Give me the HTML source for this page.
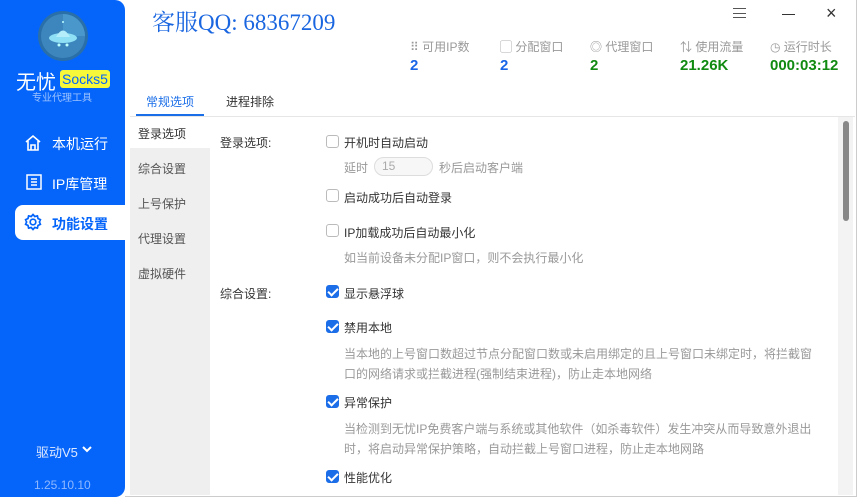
<!DOCTYPE html>
<html><head><meta charset="utf-8"><style>
*{margin:0;padding:0;box-sizing:border-box}
body{width:861px;height:503px;background:#fff;font-family:"Liberation Sans","Noto Sans CJK SC",sans-serif;font-size:12px;color:#333;position:relative;overflow:hidden}
.a{position:absolute;white-space:nowrap}
.side{position:absolute;left:0;top:0;width:125px;height:497px;background:#0565fa;border-radius:0 10px 10px 0}
.cb{position:absolute;width:13px;height:13px;border:1px solid #bbb;border-radius:3px;background:#fff}
.cb.on{background:#1c6de8;border-color:#1c6de8}
.cb.on:after{content:"";position:absolute;left:3px;top:0px;width:4px;height:8px;border:solid #fff;border-width:0 2px 2px 0;transform:rotate(45deg)}
.g{color:#999}
.lab{color:#999;font-size:12px}
.val{font-size:15px;font-weight:bold}
</style></head><body>
<div class="side">
 <svg class="a" style="left:37px;top:10px" width="52" height="52" viewBox="0 0 52 52">
  <circle cx="26" cy="26" r="25" fill="#2a6fa8"/><circle cx="26" cy="26" r="22" fill="#3d86bd"/>
  <path d="M26 4 A22 22 0 0 1 48 26 L26 26Z" fill="#4a97cc"/>
  <ellipse cx="26" cy="28" rx="14" ry="5" fill="#8fe0f5"/><path d="M19 27 Q26 14 33 27Z" fill="#b5eefa"/>
  <circle cx="22" cy="35" r="1.5" fill="#bff"/><circle cx="30" cy="35" r="1.5" fill="#bff"/><circle cx="26" cy="12" r="1" fill="#bff"/>
 </svg>
 <div class="a" style="left:16px;top:66px;color:#fff;font-size:20px">无忧</div>
 <div class="a" style="left:60px;top:70px;background:#f8f83a;color:#0565fa;font-size:14px;padding:0 2px;border-radius:3px;line-height:18px">Socks5</div>
 <div class="a" style="left:32px;top:89px;color:#9cc2ff;font-size:10px">专业代理工具</div>
 <svg class="a" style="left:24px;top:134px" width="18" height="18" viewBox="0 0 18 18" fill="none" stroke="#fff" stroke-width="1.6"><path d="M2 8 L9 2 L16 8 M4 7 V16 H14 V7 M7 16 V11 H11 V16"/></svg>
 <div class="a" style="left:52px;top:134px;color:#fff;font-size:14px">本机运行</div>
 <svg class="a" style="left:26px;top:174px" width="16" height="16" viewBox="0 0 16 16" fill="none" stroke="#fff" stroke-width="1.5"><rect x="1" y="1" width="14" height="14"/><path d="M5 5h6M5 8h6M5 11h6"/></svg>
 <div class="a" style="left:52px;top:174px;color:#fff;font-size:14px">IP库管理</div>
 <div class="a" style="left:15px;top:205px;width:110px;height:35px;background:#fff;border-radius:8px 0 0 8px"></div>
 <svg class="a" style="left:24px;top:213px" width="18" height="18" viewBox="0 0 18 18" fill="none" stroke="#0565fa" stroke-width="1.7"><circle cx="9" cy="9" r="2.8"/><path d="M9 1.5l1.8 2 2.6-.6.6 2.6 2.4 1.2-1 2.3 1 2.3-2.4 1.2-.6 2.6-2.6-.6L9 16.5l-1.8-2-2.6.6-.6-2.6L1.6 11.3l1-2.3-1-2.3L4 5.5l.6-2.6 2.6.6z"/></svg>
 <div class="a" style="left:52px;top:214px;color:#0565fa;font-size:14px;font-weight:bold">功能设置</div>
 <div class="a" style="left:36px;top:442px;color:#dfe9ff;font-size:13px">驱动V5</div>
 <svg class="a" style="left:82px;top:445px" width="10" height="8" viewBox="0 0 10 8" fill="none" stroke="#fff" stroke-width="2"><path d="M1 2l4 4 4-4"/></svg>
 <div class="a" style="left:34px;top:478px;color:#8fb8ff;font-size:12px">1.25.10.10</div>
</div>
<div class="a" style="left:152px;top:4px;color:#1a66e0;font-size:23px;font-family:'Liberation Serif','Noto Serif CJK SC',serif">客服QQ: 68367209</div>
<div class="a" style="left:733px;top:8px;width:13px;border-top:1.5px solid #555;height:10px;border-bottom:1.5px solid #555"></div>
<div class="a" style="left:733px;top:13px;width:13px;border-top:1.5px solid #555"></div>
<div class="a" style="left:782px;top:14px;width:13px;border-top:1.5px solid #333"></div>
<div class="a" style="left:826px;top:3px;font-size:18px;color:#333">×</div>
<div class="a lab" style="left:410px;top:38px">⠿ 可用IP数</div><div class="a val" style="left:410px;top:57px;color:#1a66e8">2</div>
<div class="a lab" style="left:500px;top:38px">▢ 分配窗口</div><div class="a val" style="left:500px;top:57px;color:#1a66e8">2</div>
<div class="a lab" style="left:590px;top:38px">◎ 代理窗口</div><div class="a val" style="left:590px;top:57px;color:#118a11">2</div>
<div class="a lab" style="left:680px;top:38px">⇅ 使用流量</div><div class="a val" style="left:680px;top:57px;color:#118a11">21.26K</div>
<div class="a lab" style="left:770px;top:38px">◷ 运行时长</div><div class="a val" style="left:770px;top:57px;color:#118a11">000:03:12</div>
<div class="a" style="left:146px;top:93px;color:#1a6ee8">常规选项</div>
<div class="a" style="left:226px;top:93px;color:#333">进程排除</div>
<div class="a" style="left:130px;top:116px;width:725px;border-top:1px solid #e6e6e6"></div>
<div class="a" style="left:136px;top:114px;width:68px;height:2px;background:#1a6ee8"></div>
<div class="a" style="left:130px;top:117px;width:80px;height:378px;background:#efefef"></div>
<div class="a" style="left:130px;top:117px;width:80px;height:31px;background:#fff"></div>
<div class="a" style="left:138px;top:125px">登录选项</div>
<div class="a" style="left:138px;top:160px;color:#555">综合设置</div>
<div class="a" style="left:138px;top:195px;color:#555">上号保护</div>
<div class="a" style="left:138px;top:230px;color:#555">代理设置</div>
<div class="a" style="left:138px;top:265px;color:#555">虚拟硬件</div>
<div class="a" style="left:838px;top:117px;width:15px;height:378px;background:#f3f3f3"></div>
<div class="a" style="left:843px;top:121px;width:6px;height:100px;background:#888;border-radius:3px"></div>
<div class="a" style="left:856px;top:0;width:1px;height:497px;background:#ccc"></div>
<div class="a" style="left:125px;top:496px;width:732px;height:1px;background:#ccc"></div>
<div class="a" style="left:220px;top:134px">登录选项:</div>
<div class="cb" style="left:326px;top:135px"></div><div class="a" style="left:344px;top:134px">开机时自动启动</div>
<div class="a g" style="left:344px;top:159px">延时</div>
<div class="a" style="left:374px;top:157px;width:59px;height:19px;border:1px solid #ddd;border-radius:10px;background:#f7f7f7;color:#aaa;padding-left:7px;line-height:17px">15</div>
<div class="a g" style="left:439px;top:159px">秒后启动客户端</div>
<div class="cb" style="left:326px;top:189px"></div><div class="a" style="left:344px;top:189px">启动成功后自动登录</div>
<div class="cb" style="left:326px;top:224px"></div><div class="a" style="left:344px;top:224px">IP加载成功后自动最小化</div>
<div class="a g" style="left:344px;top:249px">如当前设备未分配IP窗口，则不会执行最小化</div>
<div class="a" style="left:220px;top:285px">综合设置:</div>
<div class="cb on" style="left:326px;top:285px"></div><div class="a" style="left:344px;top:285px">显示悬浮球</div>
<div class="cb on" style="left:326px;top:320px"></div><div class="a" style="left:344px;top:319px">禁用本地</div>
<div class="a g" style="left:344px;top:344px;line-height:20px">当本地的上号窗口数超过节点分配窗口数或未启用绑定的且上号窗口未绑定时，将拦截窗<br>口的网络请求或拦截进程(强制结束进程)，防止走本地网络</div>
<div class="cb on" style="left:326px;top:395px"></div><div class="a" style="left:344px;top:394px">异常保护</div>
<div class="a g" style="left:344px;top:419px;line-height:20px">当检测到无忧IP免费客户端与系统或其他软件（如杀毒软件）发生冲突从而导致意外退出<br>时，将启动异常保护策略，自动拦截上号窗口进程，防止走本地网路</div>
<div class="cb on" style="left:326px;top:470px"></div><div class="a" style="left:344px;top:469px">性能优化</div>
</body></html>
